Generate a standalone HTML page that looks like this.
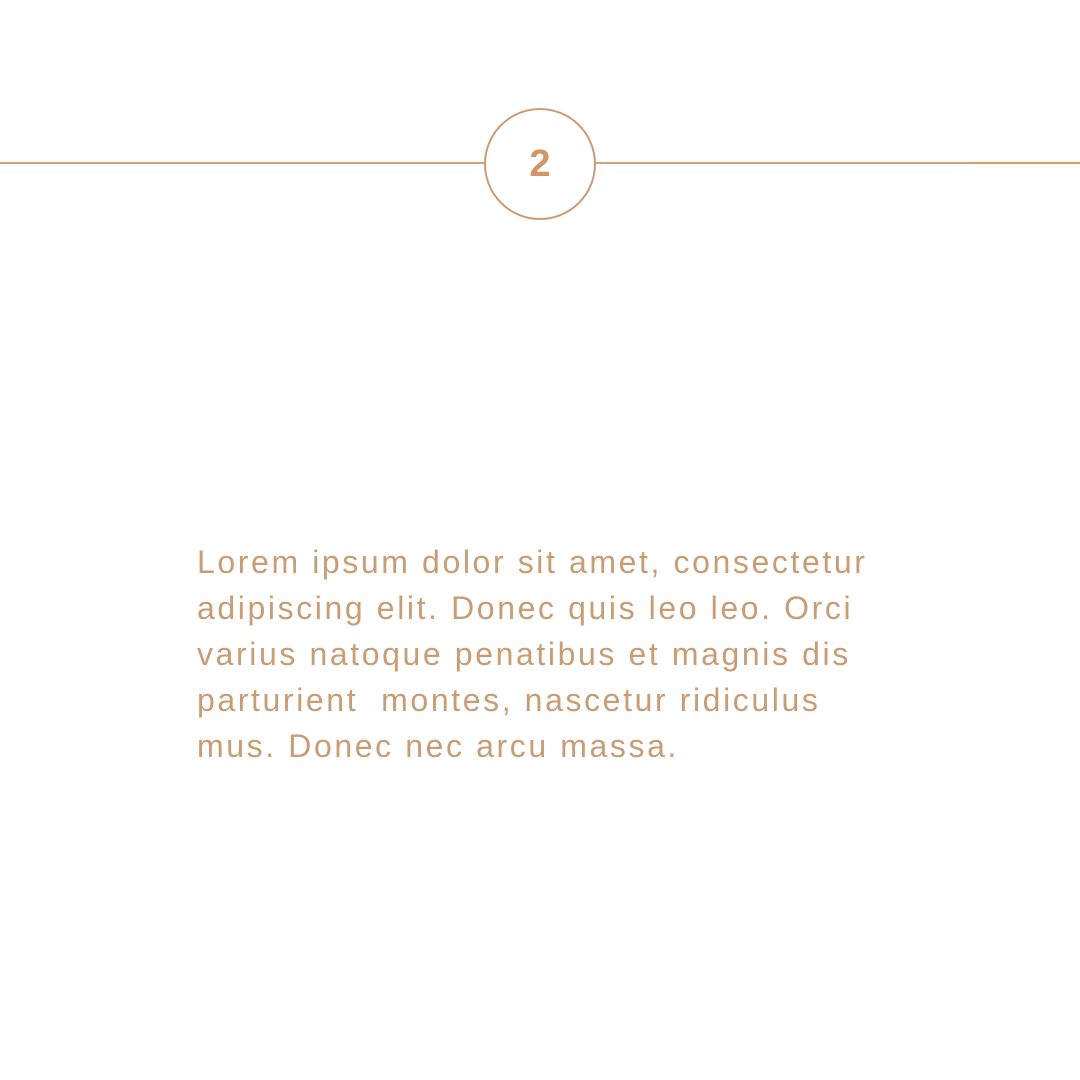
<!DOCTYPE html>
<html><head><style>
html,body{margin:0;padding:0;background:#fff;}
body{width:1080px;height:1080px;position:relative;overflow:hidden;font-family:"Liberation Sans",sans-serif;}
.line{position:absolute;top:162px;height:2px;background:#d0a27c;}
.circle{position:absolute;left:484px;top:108px;width:108px;height:108px;border:2px solid #cc9c76;border-radius:50%;text-align:center;line-height:108px;font-size:38px;font-weight:bold;color:#d29566;}
.txt{position:absolute;left:197px;top:539px;font-size:32px;line-height:46px;color:#c99c74;letter-spacing:2.6px;white-space:nowrap;}
</style></head><body>
<div class="line" style="left:0;width:485px"></div>
<div class="line" style="left:595px;width:375px"></div>
<div class="line" style="left:970px;width:110px;background:#e09a62"></div>
<div class="circle">2</div>
<div class="txt">Lorem ipsum dolor sit amet, consectetur<br>adipiscing elit. Donec quis leo leo. Orci<br>varius natoque penatibus et magnis dis<br>parturient&nbsp; montes, nascetur ridiculus<br>mus. Donec nec arcu massa.</div>
</body></html>
